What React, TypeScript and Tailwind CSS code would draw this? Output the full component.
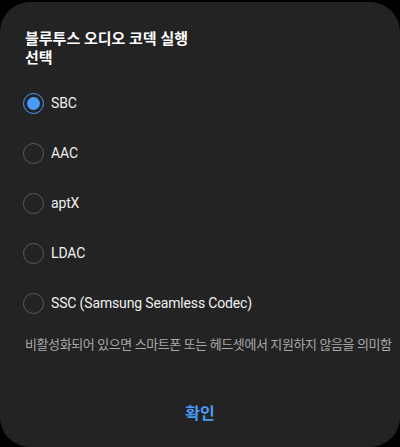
import React, { useState } from 'react';

const codecs = ['SBC', 'AAC', 'aptX', 'LDAC', 'SSC (Samsung Seamless Codec)'];

const font = "font-['Roboto','Noto_Sans_CJK_KR',sans-serif]";

const Radio: React.FC<{ checked: boolean }> = ({ checked }) => (
    <span
        className={
            checked
                ? 'flex h-[21px] w-[21px] items-center justify-center rounded-full border-[1.5px] border-[#4a9af8]'
                : 'flex h-[21px] w-[21px] items-center justify-center rounded-full border-[1.5px] border-[#5c5c5c]'
        }
    >
        {checked && <span className="h-[13px] w-[13px] rounded-full bg-[#4a9af8]" />}
    </span>
);

export default function App() {
    const [selected, setSelected] = useState(0);

    return (
        <div className={`h-[447px] w-[400px] bg-black pt-[2px] ${font}`}>
            <div className="flex h-[445px] flex-col rounded-[30px] bg-[#232323]">
                <h1 className="px-[25px] pt-[28px] text-[15px] font-bold leading-[19px] text-white">
                    블루투스 오디오 코덱 실행
                    <br />
                    선택
                </h1>
                <ul className="mt-[10px] flex flex-col">
                    {codecs.map((c, i) => (
                        <li
                            key={c}
                            onClick={() => setSelected(i)}
                            className="flex h-[50px] items-center gap-[7px] pl-[23px]"
                        >
                            <Radio checked={i === selected} />
                            <span className="text-[14px] tracking-[-0.15px] text-[#f0f0f0]">{c}</span>
                        </li>
                    ))}
                </ul>
                <p className="mt-[7px] whitespace-nowrap px-[25px] text-[13px] tracking-[-0.4px] text-[#a8a8a8]">
                    비활성화되어 있으면 스마트폰 또는 헤드셋에서 지원하지 않음을 의미함
                </p>
                <div className="mt-[47px] flex justify-center">
                    <button className="text-[16px] font-bold text-[#4a9af8]">확인</button>
                </div>
            </div>
        </div>
    );
}
